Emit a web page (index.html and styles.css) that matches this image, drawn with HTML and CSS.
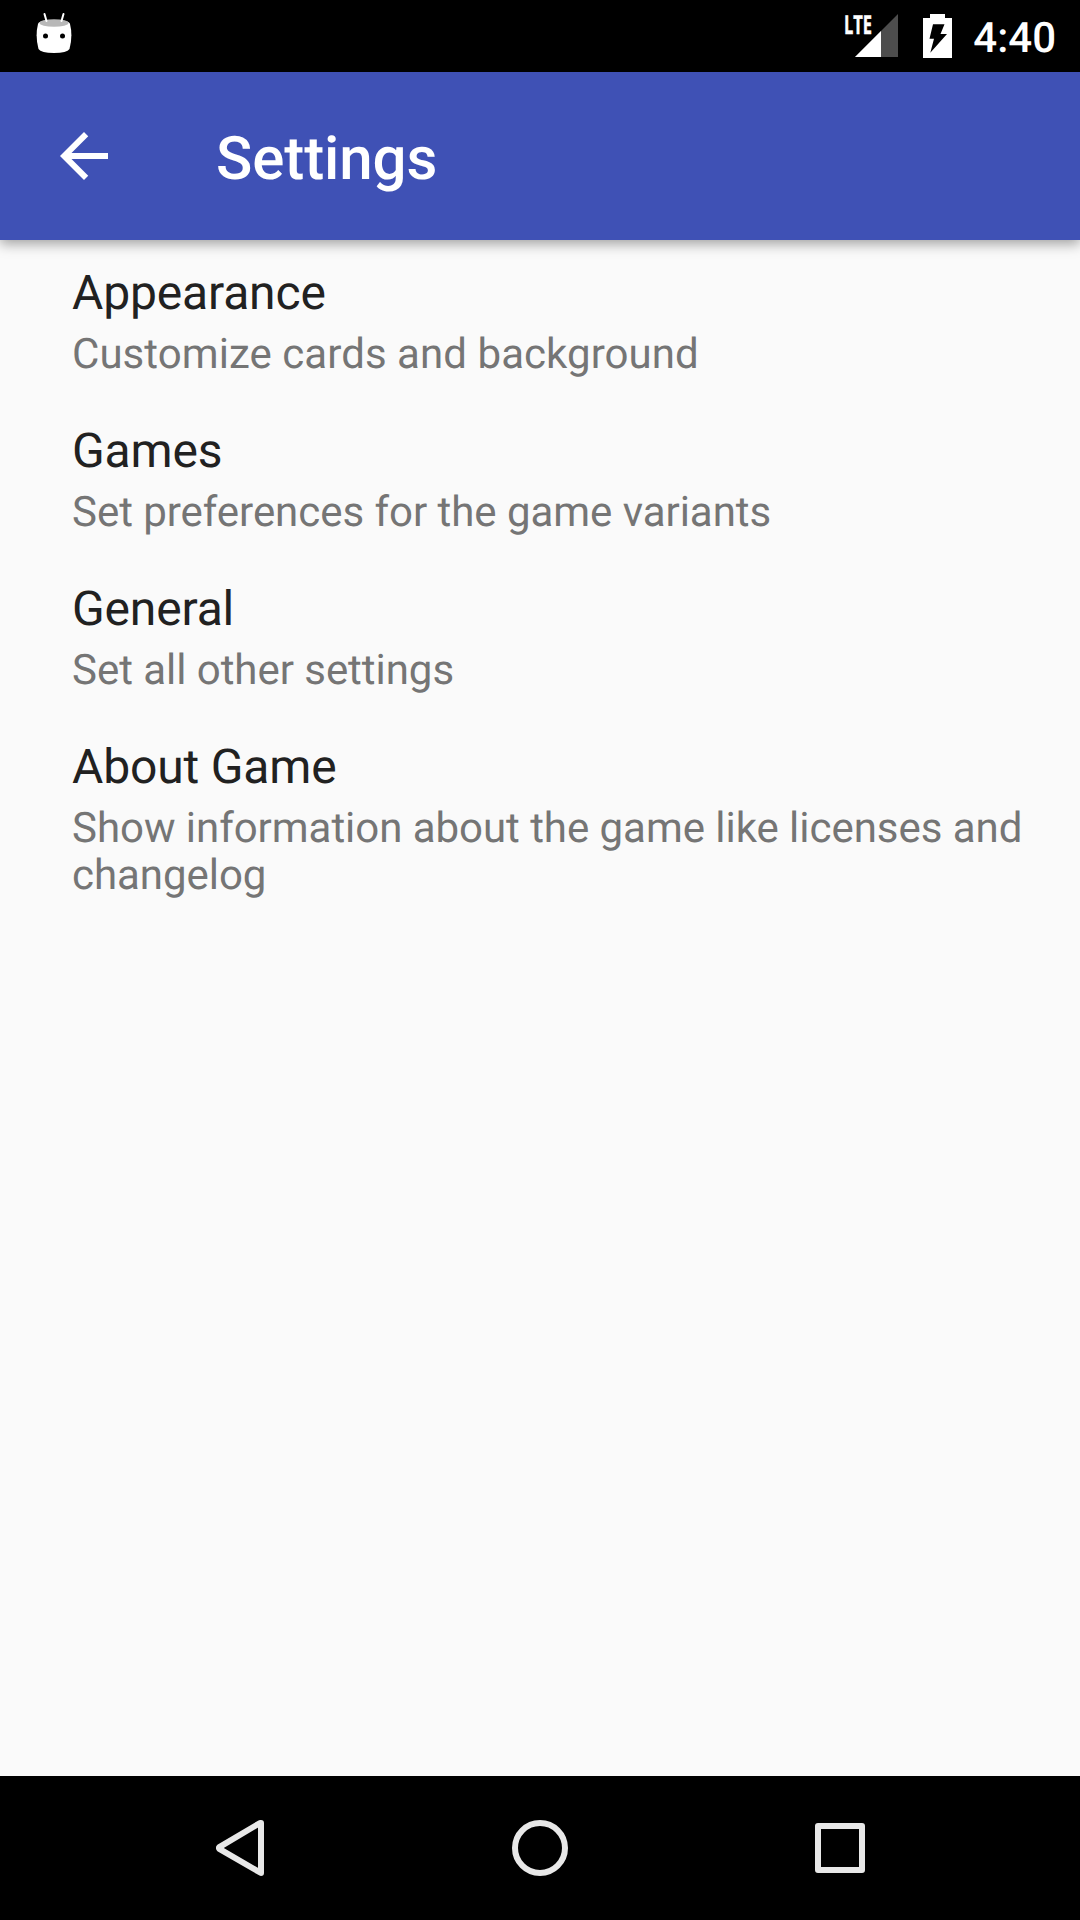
FILE: index.html
```html
<!DOCTYPE html>
<html lang="en">
<head>
<meta charset="utf-8">
<title>Settings</title>
<link rel="stylesheet" href="styles.css">
</head>
<body>
<header class="status">
  <svg class="droid" width="36" height="44" viewBox="0 0 36 44"><path d="M2 12Q3 8 18 8T34 12Q37 24 33.500 37Q31 41 18 41T2.500 37Q-1 24 2 12Z" fill="#fff"/><ellipse cx="18" cy="11" rx="14.500" ry="3.800" fill="#b8b8b8"/><path d="M8.500 2l2 7M27.500 2l-2 7" stroke="#fff" stroke-width="2" stroke-linecap="round"/><circle cx="9.500" cy="24" r="2.500"/><circle cx="26.500" cy="24" r="2.500"/></svg>
  <div class="tray">
    <svg class="signal" width="54" height="50" viewBox="0 -6 54 50"><path d="M54 0V43H11Z" fill="#4d4d4d"/><path d="M37 17V43H11Z" fill="#fff"/><text class="lte" x="0" y="19.700" textLength="28" lengthAdjust="spacingAndGlyphs">LTE</text></svg>
    <svg class="battery" width="29" height="44" viewBox="0 0 29 44"><path d="M7 0H22V4H29V44H0V4H7Z" fill="#fff"/><path d="M10 10.300H21.500L17.500 20H24L7.300 38.700L11 24.700H6.500Z"/></svg>
    <span class="clock">4:40</span>
  </div>
</header>
<nav class="appbar">
  <svg class="back" width="72" height="72" viewBox="0 0 24 24"><path d="M20 11H7.830l5.590-5.590L12 4l-8 8 8 8 1.410-1.410L7.830 13H20v-2z" fill="#fff"/></svg>
  <h1 class="title">Settings</h1>
</nav>
<main class="list">
  <section class="item"><h2>Appearance</h2><p class="wide">Customize cards and background</p></section>
  <section class="item"><h2>Games</h2><p>Set preferences for the game variants</p></section>
  <section class="item"><h2>General</h2><p>Set all other settings</p></section>
  <section class="item"><h2>About Game</h2><p>Show information about the game like licenses and changelog</p></section>
</main>
<footer class="navbar">
  <svg width="60" height="60" viewBox="0 0 60 60"><path d="M51 5V55L9.300 30.800Q8.500 30 9.300 29.200L50 5Z"/></svg>
  <svg width="60" height="60" viewBox="0 0 60 60"><circle cx="30" cy="30" r="25"/></svg>
  <svg width="60" height="60" viewBox="0 0 60 60"><rect x="8" y="8" width="44" height="44"/></svg>
</footer>
</body>
</html>
```
FILE: styles.css
```css
* { box-sizing: border-box; }
body { margin: 0; width: 1080px; height: 1920px; display: flex; flex-direction: column; overflow: hidden; background: #fafafa; font-family: Roboto, sans-serif; text-rendering: geometricPrecision; }
.status { height: 72px; flex: none; background: #000; display: flex; justify-content: space-between; padding: 12px 24px 0 36px; }
.tray { display: flex; }
.signal { margin: -4px 25px 0 0; }
.battery { margin: 2px 21px 0 0; }
.lte { font: 700 26px "Open Sans", sans-serif; fill: #fff; stroke: #fff; stroke-width: .5; }
.clock { padding-top: 2px; color: #fff; font-size: 42px; line-height: 50px; font-weight: 500; }
.appbar { height: 168px; flex: none; display: flex; align-items: center; padding-left: 48px; background: #3f51b5; box-shadow: 0 4px 12px rgba(0,0,0,.36); }
.title { margin: 4px 0 0 96px; color: #fff; font-size: 60px; font-weight: 500; letter-spacing: -.1px; }
.list { flex: 1; padding: 25px 48px 0 72px; }
.item { height: 158px; }
.item h2 { margin: 0; font-size: 48px; line-height: 56px; font-weight: 400; letter-spacing: -.16px; color: #212121; }
.item p { margin: 10px 0 0; font-size: 42px; line-height: 47px; letter-spacing: -.04px; color: #757575; }
.item .wide { letter-spacing: .06px; }
.navbar { height: 144px; flex: none; display: flex; align-items: center; justify-content: center; gap: 240px; background: #000; }
.navbar svg { fill: none; stroke: #e8e8e8; stroke-width: 6; stroke-linejoin: round; }
```
